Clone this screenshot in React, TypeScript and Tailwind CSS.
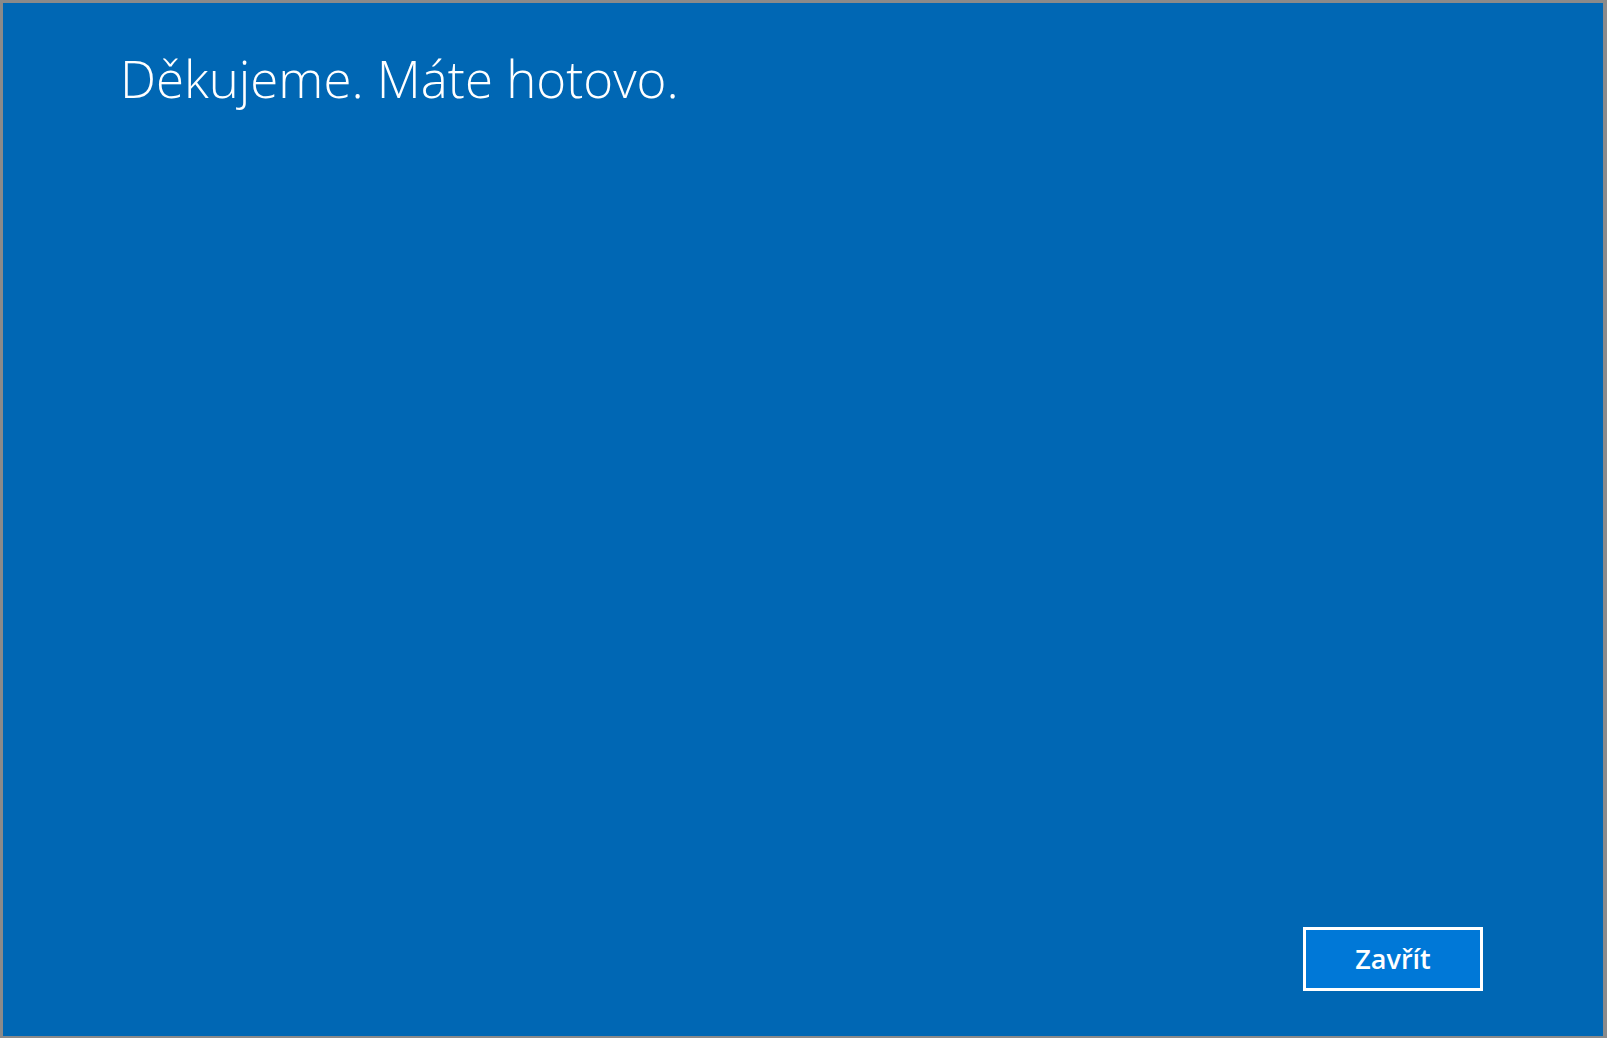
export default function App() {
  return (
    <div className="h-[1038px] w-[1607px] bg-[#8a8a8a] pt-[3px] pl-[3px] pr-[4px] pb-[2px]">
      <div
        className="flex h-full w-full flex-col justify-between bg-[#0067b4] pb-[45px] pl-[117px] pr-[120px] pt-[42px] text-white"
        style={{ fontFamily: '"Open Sans", "Noto Sans", sans-serif' }}
      >
        <h1 className="text-[51px] font-light leading-[66px]">Děkujeme. Máte hotovo.</h1>
        <div className="flex justify-end">
          <button className="h-[64px] w-[180px] border-[3px] border-white bg-[#0078d7] text-[27px] font-semibold">
            Zavřít
          </button>
        </div>
      </div>
    </div>
  );
}
